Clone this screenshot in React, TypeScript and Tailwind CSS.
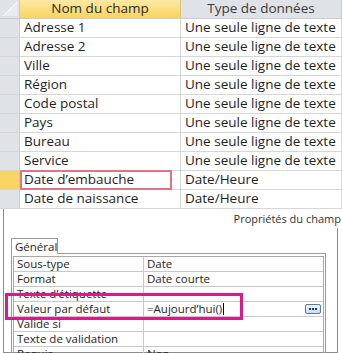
import React from 'react';

const fields: { name: string; type: string }[] = [
  { name: 'Adresse 1', type: 'Une seule ligne de texte' },
  { name: 'Adresse 2', type: 'Une seule ligne de texte' },
  { name: 'Ville', type: 'Une seule ligne de texte' },
  { name: 'Région', type: 'Une seule ligne de texte' },
  { name: 'Code postal', type: 'Une seule ligne de texte' },
  { name: 'Pays', type: 'Une seule ligne de texte' },
  { name: 'Bureau', type: 'Une seule ligne de texte' },
  { name: 'Service', type: 'Une seule ligne de texte' },
  { name: 'Date d’embauche', type: 'Date/Heure' },
  { name: 'Date de naissance', type: 'Date/Heure' },
];

const props: { label: string; value: string }[] = [
  { label: 'Sous-type', value: 'Date' },
  { label: 'Format', value: 'Date courte' },
  { label: 'Texte d’étiquette', value: '' },
  { label: 'Valeur par défaut', value: '=Aujourd’hui()' },
  { label: 'Valide si', value: '' },
  { label: 'Texte de validation', value: '' },
  { label: 'Requis', value: 'Non' },
];

const DotsButton: React.FC = () => (
  <span className="flex h-[10px] w-[16px] items-center justify-center gap-[1px] rounded-[2px] border border-[#5b7aa8] bg-gradient-to-b from-[#eef5fc] to-[#c9ddf2]">
    <span className="h-[2px] w-[2px] bg-[#1d3a6b]" />
    <span className="h-[2px] w-[2px] bg-[#1d3a6b]" />
    <span className="h-[2px] w-[2px] bg-[#1d3a6b]" />
  </span>
);

const FieldGrid: React.FC = () => (
  <div className="w-full">
    <div className="flex h-[19px] border-b border-[#c9cdd3]">
      <div className="relative w-[20px] shrink-0 border-r border-[#c9cdd3] bg-[#dfe3e8]">
        <svg className="absolute bottom-[2px] right-[2px]" width="14" height="14" viewBox="0 0 14 14">
          <path d="M14 0 L14 14 L0 14 Z" fill="#e9ecf0" />
          <path d="M14 0 L0 14" stroke="#ffffff" strokeWidth="1" />
        </svg>
      </div>
      <div className="flex w-[161px] shrink-0 items-center justify-center border-r border-[#e2c36a] bg-gradient-to-b from-[#fde9a3] to-[#f8d45e] text-[#2b2b2b]">
        Nom du champ
      </div>
      <div className="flex flex-1 items-center justify-center border-r border-[#c9cdd3] bg-[#dfe3e8] text-[#3a3a3a]">
        Type de données
      </div>
    </div>
    {fields.map((f) => {
      const active = f.name === 'Date d’embauche';
      return (
        <div key={f.name} className="flex h-[19px] border-b border-[#d6d6d6]">
          <div
            className={
              active
                ? 'w-[20px] shrink-0 border-r border-[#c9cdd3] bg-[#f9d564]'
                : 'w-[20px] shrink-0 border-r border-[#c9cdd3] bg-[#dfe3e8]'
            }
          />
          <div className="relative flex w-[161px] shrink-0 items-center border-r border-[#d6d6d6] pl-[4px]">
            {f.name}
            {active && (
              <span className="absolute -bottom-[1px] -top-[1px] left-0 right-[8px] border-2 border-[#e07482]" />
            )}
          </div>
          <div className="flex flex-1 items-center border-r border-[#d6d6d6] pl-[4px]">{f.type}</div>
        </div>
      );
    })}
  </div>
);

const PropertySheet: React.FC = () => (
  <div className="relative ml-[3px] h-[125px] w-[335px] border-b border-l border-r border-[#8c8c8c] pt-[10px] text-[11.5px]">
    <div className="ml-[7px] flex">
      <div className="relative z-10 -mb-px flex h-[16px] w-[47px] items-center border-l border-r border-t border-[#9a9a9a] bg-white pl-[3px]">
        Général
      </div>
    </div>
    <div className="ml-[7px] h-[200px] w-[315px] overflow-hidden border-l border-r border-t border-[#9a9a9a] px-[1px] pt-[2px]">
      <div className="border border-[#a8a8a8]">
        {props.map((p) => (
          <div key={p.label} className="flex h-[15px] border-b border-[#c8c8c8]">
            <div className="flex w-[130px] shrink-0 items-center border-r border-[#c8c8c8] pl-[3px]">
              {p.label}
            </div>
            <div className="flex flex-1 items-center pl-[3px] pr-[2px]">
              <span>{p.value}</span>
              {p.label === 'Valeur par défaut' && (
                <>
                  <span className="ml-[1px] h-[12px] w-[1px] bg-black" />
                  <span className="ml-auto">
                    <DotsButton />
                  </span>
                </>
              )}
            </div>
          </div>
        ))}
      </div>
    </div>
    <span className="absolute left-[1px] top-[65px] h-[27px] w-[238px] border-[3px] border-[#da1a88]" />
  </div>
);

export default function App() {
  return (
    <div
      className="h-[353px] w-[342px] overflow-hidden bg-white text-[13.5px] leading-none text-[#1e1e1e]"
      style={{ fontFamily: '"Open Sans", "Noto Sans", sans-serif' }}
    >
      <FieldGrid />
      <div className="ml-[3px] flex h-[19px] items-center justify-end border-l border-[#8c8c8c] pr-[1px] text-[11px] text-[#333333]">
        Propriétés du champ
      </div>
      <PropertySheet />
    </div>
  );
}
